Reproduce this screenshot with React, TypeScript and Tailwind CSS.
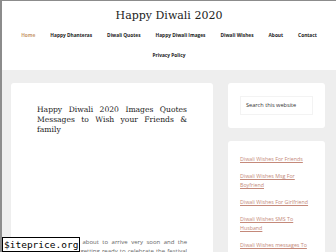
import React from 'react';

const navItems = ['Home', 'Happy Dhanteras', 'Diwali Quotes', 'Happy Diwali Images', 'Diwali Wishes', 'About', 'Contact', 'Privacy Policy'];

const sideLinks = [
  'Diwali Wishes For Friends',
  'Diwali Wishes Msg For Boyfriend',
  'Diwali Wishes For Girlfriend',
  'Diwali Wishes SMS To Husband',
  'Diwali Wishes messages To Wife',
];

const serif = { fontFamily: '"DejaVu Serif", serif' };

const App: React.FC = () => {
  return (
    <div className="relative w-[336px] h-[252px] overflow-hidden bg-[#eeeeee] border-l-2 border-t border-[#8c8c8c] font-['Open_Sans',sans-serif]">
      {/* Header */}
      <header className="bg-white h-[69px] flex flex-col items-center">
        <h1 style={serif} className="text-[11px] leading-none text-[#222] mt-[9px]">Happy Diwali 2020</h1>
        <nav className="w-[300px] mt-[10px]">
          <ul className="flex flex-wrap justify-center gap-x-[15px] gap-y-[12px]">
            {navItems.map((item, i) => (
              <li
                key={item}
                className={`text-[4.8px] leading-[8px] font-bold ${i === 0 ? 'text-[#c99a6e]' : 'text-[#222]'}`}
              >
                {item}
              </li>
            ))}
          </ul>
        </nav>
      </header>

      {/* Content */}
      <div className="flex pt-[13px] pl-[9px]">
        <article className="w-[202px] h-[200px] bg-white rounded-[3px] px-[26px] pt-[22px]">
          <h2 style={serif} className="text-[7.6px] leading-[10px] text-[#222] text-justify">
            Happy Diwali 2020 Images Quotes Messages to Wish your Friends &amp; family
          </h2>
          <p className="mt-[103px] text-[6px] leading-[9px] text-[#666] text-justify">
            Diwali is soon about to arrive very soon and the whole world is getting ready to celebrate the festival of lights.
          </p>
        </article>

        <aside className="w-[97px] ml-[15px] flex flex-col gap-[13px]">
          <div className="bg-white rounded-[3px] h-[45px] px-[12px] pt-[13px]">
            <div className="h-[19px] border border-[#f3f3f3] flex items-center pl-[5px] text-[5.6px] text-[#333]">
              Search this website
            </div>
          </div>
          <div className="bg-white rounded-[3px] h-[130px] px-[12px] pt-[14px]">
            <ul className="flex flex-col gap-[8px]">
              {sideLinks.map((l) => (
                <li key={l} className="text-[5.3px] leading-[9px] text-[#c4897a] underline">
                  {l}
                </li>
              ))}
            </ul>
          </div>
        </aside>
      </div>

      {/* watermark overlay */}
      <div className="absolute left-0 bottom-0 bg-white border border-black px-[1px] text-[9.5px] leading-[13px] text-black font-['DejaVu_Sans_Mono',monospace]">
        $iteprice.org
      </div>
    </div>
  );
};

export default App;
